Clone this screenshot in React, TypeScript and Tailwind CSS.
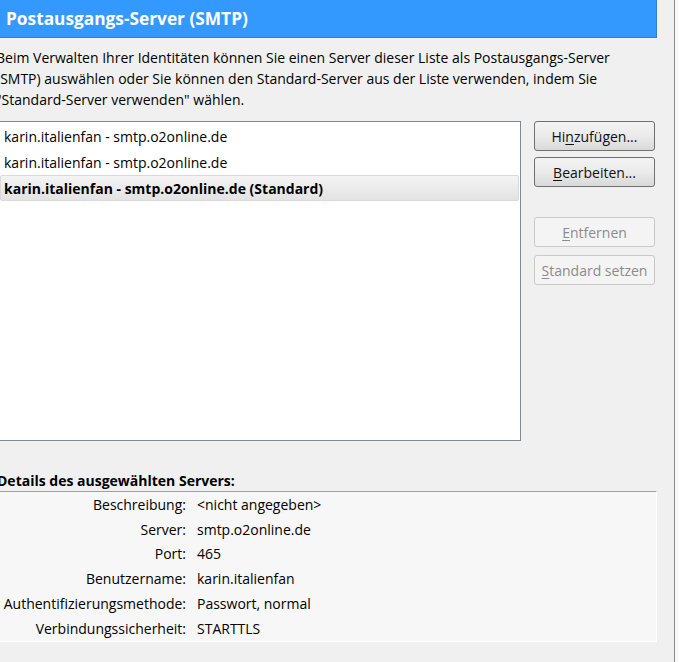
import React from 'react';

const font = { fontFamily: '"Open Sans", "Liberation Sans", sans-serif' };

const servers = [
  { name: 'karin.italienfan - smtp.o2online.de', selected: false },
  { name: 'karin.italienfan - smtp.o2online.de', selected: false },
  { name: 'karin.italienfan - smtp.o2online.de (Standard)', selected: true },
];

const details: [string, string][] = [
  ['Beschreibung:', '<nicht angegeben>'],
  ['Server:', 'smtp.o2online.de'],
  ['Port:', '465'],
  ['Benutzername:', 'karin.italienfan'],
  ['Authentifizierungsmethode:', 'Passwort, normal'],
  ['Verbindungssicherheit:', 'STARTTLS'],
];

// label with an underlined access key
const AccessLabel = ({ text, index }: { text: string; index: number }) => (
  <span>
    {text.slice(0, index)}
    <span className="underline underline-offset-2">{text[index]}</span>
    {text.slice(index + 1)}
  </span>
);

const Button = ({ text, keyIndex, disabled }: { text: string; keyIndex: number; disabled?: boolean }) => (
  <button
    className={
      disabled
        ? 'h-[30px] w-full rounded-[3px] border border-[#c9c9c9] bg-[#f4f4f4] text-[14px] text-[#8b8b8b]'
        : 'h-[30px] w-full rounded-[3px] border border-[#707070] bg-gradient-to-b from-[#f3f3f3] via-[#ebebeb] to-[#d9d9d9] text-[14px] text-[#111]'
    }
  >
    <AccessLabel text={text} index={keyIndex} />
  </button>
);

export default function App() {
  return (
    <div className="flex h-[662px] w-[679px] overflow-hidden bg-[#f0f0f0] text-black" style={font}>
      <div className="flex w-[674px] flex-col">
        <div className="flex h-[38px] w-[657px] items-center border-b border-r border-[#2f7fcf] bg-[#3399ff] pl-[6px] text-[17.3px] font-bold text-white">
          Postausgangs-Server (SMTP)
        </div>

        <p className="-ml-[4px] mt-[9px] w-[650px] text-[14px] leading-[21px]">
          Beim Verwalten Ihrer Identitäten können Sie einen Server dieser Liste als Postausgangs-Server (SMTP)
          auswählen oder Sie können den Standard-Server aus der Liste verwenden, indem Sie "Standard-Server
          verwenden" wählen.
        </p>

        <div className="mt-[11px] flex">
          <div className="-ml-[2px] h-[320px] w-[523px] border border-[#828790] bg-white p-[1px]">
            {servers.map((s, i) => (
              <div
                key={i}
                className={
                  s.selected
                    ? 'flex h-[26px] items-center rounded-[2px] border border-[#d9d9d9] bg-gradient-to-b from-[#f4f4f4] to-[#e3e3e3] pl-[3px] text-[14px] font-bold'
                    : 'flex h-[26px] items-center pl-[4px] text-[14px]'
                }
              >
                {s.name}
              </div>
            ))}
          </div>

          <div className="ml-[13px] flex w-[121px] flex-col">
            <Button text="Hinzufügen..." keyIndex={2} />
            <div className="mt-[6px]">
              <Button text="Bearbeiten..." keyIndex={0} />
            </div>
            <div className="mt-[30px]">
              <Button text="Entfernen" keyIndex={0} disabled />
            </div>
            <div className="mt-[8px]">
              <Button text="Standard setzen" keyIndex={0} disabled />
            </div>
          </div>
        </div>

        <div className="-ml-[3px] mt-[29px] text-[14px] font-bold leading-[21px]">Details des ausgewählten Servers:</div>

        <div className="-ml-[2px] w-[659px] border-b border-r border-t border-b-white border-r-white border-t-[#a0a0a0] bg-[#f7f7f7]">
          {details.map(([label, value]) => (
            <div key={label} className="flex h-[24.8px] items-center text-[14px]">
              <div className="w-[188px] text-right">{label}</div>
              <div className="pl-[11px]">{value}</div>
            </div>
          ))}
        </div>
      </div>
      <div className="flex-1 border-l border-[#8c8c8c] bg-[#f8f8f8]" />
    </div>
  );
}
